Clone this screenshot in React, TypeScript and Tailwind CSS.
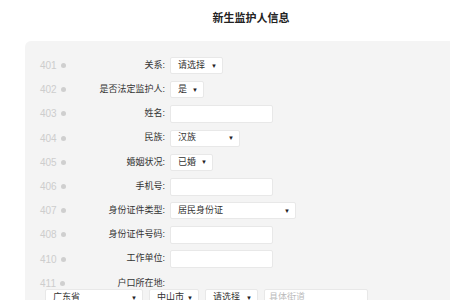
import React from 'react';

type Field =
    | { no: string; label: string; kind: 'select'; value: string; width: string }
    | { no: string; label: string; kind: 'input'; width: string };

const fields: Field[] = [
    { no: '401', label: '关系:', kind: 'select', value: '请选择', width: 'w-[53px]' },
    { no: '402', label: '是否法定监护人:', kind: 'select', value: '是', width: 'w-[34px]' },
    { no: '403', label: '姓名:', kind: 'input', width: 'w-[103px]' },
    { no: '404', label: '民族:', kind: 'select', value: '汉族', width: 'w-[70px]' },
    { no: '405', label: '婚姻状况:', kind: 'select', value: '已婚', width: 'w-[43px]' },
    { no: '406', label: '手机号:', kind: 'input', width: 'w-[103px]' },
    { no: '407', label: '身份证件类型:', kind: 'select', value: '居民身份证', width: 'w-[126px]' },
    { no: '408', label: '身份证件号码:', kind: 'input', width: 'w-[103px]' },
    { no: '410', label: '工作单位:', kind: 'input', width: 'w-[103px]' },
];

function FakeSelect({ value, width }: { value: string; width: string }) {
    return (
        <div className={`${width} h-[17px] flex items-center justify-between pl-[7px] pr-[5px] bg-white border border-[#e8e8e8] rounded-[2px] text-[9px] text-[#333]`}>
            <span>{value}</span>
            <span className="text-[6px] leading-none text-[#222]">▼</span>
        </div>
    );
}

function FakeInput({ width, placeholder }: { width: string; placeholder?: string }) {
    return (
        <div className={`${width} h-[18px] flex items-center px-[4px] bg-white border border-[#e8e8e8] rounded-[2px] text-[9px] text-[#bbb]`}>
            {placeholder}
        </div>
    );
}

function RowHead({ no, label }: { no: string; label: string }) {
    return (
        <>
            {/* field number + dot */}
            <div className="w-[26px] flex items-center gap-[4px] text-[10px] text-[#cdcdcd]">
                <span>{no}</span>
                <span className="w-[5px] h-[5px] rounded-full bg-[#cfcfcf]" />
            </div>
            <div className="w-[99px] text-right text-[9px] text-[#333]">{label}</div>
        </>
    );
}

export default function App() {
    return (
        <div
            className="w-[450px] h-[300px] overflow-hidden bg-white"
            style={{ fontFamily: '"Liberation Sans", "Noto Sans CJK SC", sans-serif' }}
        >
            <div className="w-[502px]">
                <h1 className="h-[41px] pt-[10px] text-center text-[11px] font-bold text-[#222]">新生监护人信息</h1>

                <div className="ml-[25px] w-[452px] h-[280px] bg-[#f4f4f4] rounded-[6px] pl-[15px] pt-[12.5px]">
                    {fields.map(f => (
                        <div key={f.no} className="h-[24.2px] flex items-center">
                            <RowHead no={f.no} label={f.label} />
                            <div className="ml-[5px]">
                                {f.kind === 'select' ? (
                                    <FakeSelect value={f.value} width={f.width} />
                                ) : (
                                    <FakeInput width={f.width} />
                                )}
                            </div>
                        </div>
                    ))}

                    {/* 户口所在地 */}
                    <div className="h-[11px] mt-[7px] flex items-center">
                        <RowHead no="411" label="户口所在地:" />
                    </div>
                    <div className="flex items-start gap-[6px] pl-[5px]">
                        <FakeSelect value="广东省" width="w-[98px]" />
                        <FakeSelect value="中山市" width="w-[50px]" />
                        <FakeSelect value="请选择" width="w-[53px]" />
                        <FakeInput width="w-[104px]" placeholder="具体街道" />
                    </div>
                </div>
            </div>
        </div>
    );
}
